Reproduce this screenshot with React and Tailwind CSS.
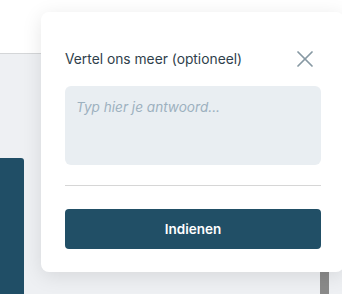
import React from "react";
import { X } from "lucide-react";

export default function App() {
  return (
    <div
      className="relative w-[342px] h-[294px] overflow-hidden bg-white"
      style={{ fontFamily: "Inter, 'Liberation Sans', sans-serif" }}
    >
      {/* background page */}
      <div className="h-[53px] bg-white" />
      <div className="w-[41px] h-px bg-[#d4d6d8]" />
      <div className="flex h-[240px] bg-[#eef0f3]">
        <div className="mt-[104px] w-[24px] h-[136px] rounded-tr-[3px] bg-[#204e66]" />
        <div className="flex-1" />
        <div className="mt-[216px] w-[9px] h-[24px] bg-[#8a8a8a] mr-[13px]" />
      </div>

      {/* feedback popover */}
      <div className="absolute left-[41px] top-[12px] w-[303px] h-[260px] rounded-[8px] bg-white shadow-[0_4px_20px_rgba(0,0,0,0.1)] pl-[24px] pr-[23px] pt-[38px]">
        <div className="flex items-center justify-between w-[256px] h-[18px]">
          <span className="text-[13.8px] text-[#2f3f4b] leading-[18px]">
            Vertel ons meer (optioneel)
          </span>
          <X size={28} strokeWidth={1.5} className="text-[#8799a3] mr-[2px]" />
        </div>
        <div className="mt-[18px] w-[256px] h-[79px] rounded-[6px] bg-[#e9eef2] px-[11px] pt-[8px]">
          <span className="text-[13.6px] italic text-[#9db1bf] leading-[18px]">
            Typ hier je antwoord...
          </span>
        </div>
        <div className="mt-[20px] w-[256px] h-px bg-[#d6d6d6]" />
        <button className="mt-[23px] flex items-center justify-center w-[256px] h-[40px] rounded-[4px] bg-[#214f66] text-white text-[13.5px] font-semibold">
          Indienen
        </button>
      </div>
    </div>
  );
}
